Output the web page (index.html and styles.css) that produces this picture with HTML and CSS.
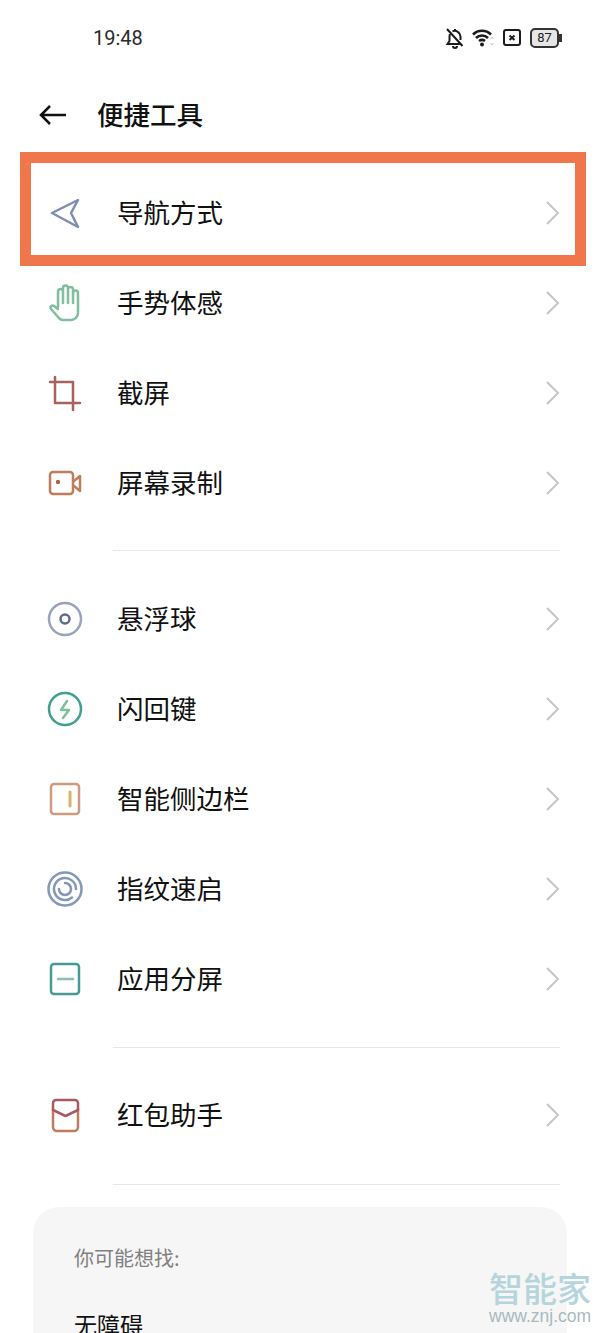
FILE: index.html
```html
<!DOCTYPE html>
<html lang="zh-CN">
<head>
    <meta charset="utf-8" />
    <title>便捷工具</title>
    <link rel="stylesheet" href="styles.css">
</head>
<body>
    <div class="status">
        <span class="ora">19:48</span>
        <div class="status-icone">
            <svg class="ic-bell" width="20" height="22" viewBox="0 0 20 22"><path d="M10 2v1.500M5.500 5.500C5 6.500 4.500 8 4.500 9.500V14l-2 3H15M7.500 4.200a6 6 0 0 1 8 5.300V13M8 19a2 2 0 0 0 4 0M2 2l15.500 17" /></svg>
            <svg class="ic-wifi" width="22" height="20" viewBox="0 0 22 20"><path d="M1 6.500c5-5 13-5 18 0M4 10c3.500-3.300 8.500-3.300 12 0M7 13c2-1.500 4-1.500 6 0" /><circle cx="10" cy="16.500" r="2" /><path class="frecce" d="M18.500 11l1.500-2 1.500 2M18.500 15l1.500 2 1.500-2" /></svg>
            <svg class="ic-box" width="18" height="18" viewBox="0 0 18 18"><rect x="1" y="1" width="16" height="15" rx="2" /><path d="M6.500 6.500l5 4.500M11.500 6.500l-5 4.500" /></svg>
            <div class="batteria"><span>87</span></div>
        </div>
    </div>

    <div class="testata">
        <svg class="ic-back" width="28" height="22" viewBox="0 0 28 22"><path d="M27 11H2M11 2l-9 9 9 9" /></svg>
        <h1>便捷工具</h1>
    </div>

    <div class="lista">
        <div class="riga">
            <svg class="icona" viewBox="0 0 40 40"><path stroke="#7d8fb0" d="M7 20L33 7l-7 13 7 14z" /></svg>
            <span class="nome">导航方式</span>
            <svg class="freccia" viewBox="0 0 16 26"><path d="M2 2l11 11L2 24" /></svg>
            <div class="evidenza"></div>
        </div>
        <div class="riga">
            <svg class="icona" viewBox="0 0 40 40"><path stroke="#7fbf9f" d="M13 24V8.500a2.500 2.500 0 0 1 5 0V5a2.500 2.500 0 0 1 5 0v1.500a2.500 2.500 0 0 1 5 0V10a2.500 2.500 0 0 1 5 0v20a7 7 0 0 1-7 7H18c-2 0-3.500-1-4.500-2.500L6 26c-1.500-2 1-4.500 3-3l4 3M18 8.500V20M23 5v15M28 6.500V20" /></svg>
            <span class="nome">手势体感</span>
            <svg class="freccia" viewBox="0 0 16 26"><path d="M2 2l11 11L2 24" /></svg>
        </div>
        <div class="riga">
            <svg class="icona" viewBox="0 0 40 40"><path stroke="#a9605f" d="M5 9h23v28M10 4v26h25" /></svg>
            <span class="nome">截屏</span>
            <svg class="freccia" viewBox="0 0 16 26"><path d="M2 2l11 11L2 24" /></svg>
        </div>
        <div class="riga">
            <svg class="icona" viewBox="0 0 40 40"><rect stroke="#bf7d5c" x="5" y="9" width="23" height="22" rx="3" /><circle fill="#a9654c" cx="13" cy="19" r="2.200" /><path stroke="#bf7d5c" d="M29 18l6-5v15l-6-5" /></svg>
            <span class="nome">屏幕录制</span>
            <svg class="freccia" viewBox="0 0 16 26"><path d="M2 2l11 11L2 24" /></svg>
        </div>
    </div>
    <hr class="divisore primo">

    <div class="lista">
        <div class="riga">
            <svg class="icona" viewBox="0 0 40 40"><circle stroke="#9aa3bd" cx="20" cy="20" r="16" /><circle stroke="#5c6a8c" cx="20" cy="20" r="4.500" /></svg>
            <span class="nome">悬浮球</span>
            <svg class="freccia" viewBox="0 0 16 26"><path d="M2 2l11 11L2 24" /></svg>
        </div>
        <div class="riga">
            <svg class="icona" viewBox="0 0 40 40"><circle stroke="#3f9f90" cx="20" cy="20" r="16" /><path stroke="#7fbf9f" d="M22 12l-6 9h8l-6 8" /></svg>
            <span class="nome">闪回键</span>
            <svg class="freccia" viewBox="0 0 16 26"><path d="M2 2l11 11L2 24" /></svg>
        </div>
        <div class="riga">
            <svg class="icona" viewBox="0 0 40 40"><rect stroke="#d09a80" x="6" y="5" width="28" height="30" rx="3" /><path stroke="#d9b36a" class="spesso" d="M25 13v14" /></svg>
            <span class="nome">智能侧边栏</span>
            <svg class="freccia" viewBox="0 0 16 26"><path d="M2 2l11 11L2 24" /></svg>
        </div>
        <div class="riga">
            <svg class="icona" viewBox="0 0 40 40"><circle stroke="#8398b8" cx="20" cy="20" r="16.500" /><path stroke="#8398b8" d="M31 20a11 11 0 1 0-4 8.500M14 20a6 6 0 1 0 6-6" /></svg>
            <span class="nome">指纹速启</span>
            <svg class="freccia" viewBox="0 0 16 26"><path d="M2 2l11 11L2 24" /></svg>
        </div>
        <div class="riga">
            <svg class="icona" viewBox="0 0 40 40"><rect stroke="#469a96" x="6" y="5" width="28" height="30" rx="3" /><path stroke="#8cbfa8" d="M13 20h15" /></svg>
            <span class="nome">应用分屏</span>
            <svg class="freccia" viewBox="0 0 16 26"><path d="M2 2l11 11L2 24" /></svg>
        </div>
    </div>
    <hr class="divisore">

    <div class="lista">
        <div class="riga">
            <svg class="icona" viewBox="0 0 40 40"><path stroke="#bb7d5a" d="M8 14v18a4 4 0 0 0 4 4h17a4 4 0 0 0 4-4V14" /><path stroke="#a85a60" d="M8 15V8a3 3 0 0 1 3-3h19a3 3 0 0 1 3 3v7l-12.500 6z" /></svg>
            <span class="nome">红包助手</span>
            <svg class="freccia" viewBox="0 0 16 26"><path d="M2 2l11 11L2 24" /></svg>
        </div>
    </div>
    <hr class="divisore ultimo">

    <div class="scheda">
        <div class="scheda-titolo">你可能想找:</div>
        <div class="scheda-voce">无障碍</div>
    </div>

    <div class="marchio">
        <div class="marchio-nome">智能家</div>
        <div class="marchio-url">www.znj.com</div>
    </div>
</body>
</html>
```

FILE: styles.css
```css
/* Pagina a tutta finestra, la scheda in fondo viene tagliata */
html, body {
    margin: 0;
    height: 1333px;
    overflow: hidden;
}

body {
    position: relative;
    background-color: #ffffff;
    color: #111111;
    font-family: "Noto Sans CJK SC", "Noto Sans", sans-serif;
}

.status {
    height: 75px;
    box-sizing: border-box;
    padding: 0 41px 0 93px;
    display: flex;
    justify-content: space-between;
    align-items: center;
}

.ora {
    font-family: Roboto, sans-serif;
    font-size: 20px;
    color: #2a2a2a;
}

.status-icone {
    display: flex;
    align-items: center;
    gap: 9px;
}

.status-icone svg {
    fill: none;
    stroke: #1c1c1c;
    stroke-width: 2;
}

.ic-bell {
    margin-right: -2px;
}

.status-icone .ic-wifi {
    stroke-width: 2.600;
}

.ic-wifi circle {
    fill: #1c1c1c;
    stroke: none;
}

.status-icone .ic-wifi .frecce {
    stroke: #c8c8c8;
    stroke-width: 1;
}

.batteria {
    width: 25px;
    height: 16px;
    border: 2px solid #333333;
    border-radius: 5px;
    background-color: #e6e6e6;
    position: relative;
    display: flex;
    justify-content: center;
    align-items: center;
    font-family: Roboto, sans-serif;
    font-size: 13px;
    color: #222222;
}

/* Il polo della batteria */
.batteria::after {
    content: "";
    position: absolute;
    right: -5px;
    top: 4px;
    width: 3px;
    height: 8px;
    background-color: #333333;
}

.testata {
    height: 80px;
    box-sizing: border-box;
    padding-left: 39px;
    display: flex;
    align-items: center;
    gap: 30px;
}

.ic-back {
    fill: none;
    stroke: #111111;
    stroke-width: 2.500;
}

h1 {
    margin: 0;
    padding-bottom: 3px;
    font-size: 26.500px;
    font-weight: 500;
}

.testata + .lista {
    margin-top: 13px;
}

.riga {
    position: relative;
    height: 90px;
    box-sizing: border-box;
    padding: 0 39px 0 45px;
    display: flex;
    align-items: center;
}

.icona {
    width: 40px;
    height: 40px;
    flex-shrink: 0;
    fill: none;
    stroke-width: 2.500;
    stroke-linejoin: round;
    stroke-linecap: round;
}

.icona .spesso {
    stroke-width: 3;
}

.nome {
    margin-left: 32px;
    padding-bottom: 4px;
    flex: 1;
    font-size: 26.500px;
}

.freccia {
    width: 16px;
    height: 26px;
    fill: none;
    stroke: #c6c6c6;
    stroke-width: 2;
}

/* Riquadro arancione sopra la prima voce */
.evidenza {
    position: absolute;
    left: 20px;
    right: 14px;
    top: -16px;
    bottom: -8px;
    border: 11px solid #f0764c;
}

.divisore {
    margin: 23px 40px 22px 113px;
    border: none;
    border-top: 1px solid #e8e8e8;
}

.divisore.primo {
    margin-top: 22px;
    margin-bottom: 23px;
}

.divisore.ultimo {
    margin-top: 24px;
}

.scheda {
    margin: 0 33px;
    height: 200px;
    box-sizing: border-box;
    padding: 36px 41px;
    background-color: #f6f6f6;
    border-radius: 26px;
}

.scheda-titolo {
    font-size: 20px;
    line-height: 30px;
    color: #808080;
}

.scheda-voce {
    margin-top: 34px;
    font-size: 23px;
    line-height: 34px;
}

/* Filigrana in basso a destra */
.marchio {
    position: absolute;
    right: 9px;
    top: 1268px;
    width: 102px;
    text-align: center;
    color: #b5d5dc;
}

.marchio-nome {
    font-size: 34px;
    font-weight: 500;
    line-height: 40px;
}

.marchio-url {
    font-family: "Liberation Sans", sans-serif;
    font-size: 17.500px;
    line-height: 16px;
    color: #a9b9bf;
}
```
